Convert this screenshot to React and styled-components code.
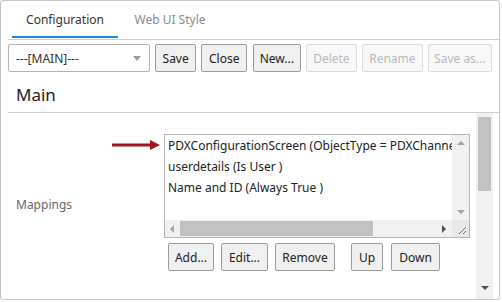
import React from 'react';
import styled, { createGlobalStyle } from 'styled-components';

const GlobalStyle = createGlobalStyle`
  body {
    margin: 0;
    background: #fff;
    font-family: "Noto Sans", "Open Sans", sans-serif;
    color: #222;
  }
`

const Frame = styled.div`
  width: 500px;
  height: 300px;
  box-sizing: border-box;
  border: 1px solid #c4c4c4;
  border-radius: 3px;
  display: flex;
  flex-direction: column;
  overflow: hidden;
`

const TabBar = styled.div`
  display: flex;
  margin: 0 0 0 7px;
  padding-left: 4px;
  border-bottom: 1px solid #cfcfcf;
  height: 39px;
  box-sizing: border-box;
`

const Tab = styled.div`
  width: ${p => p.w}px;
  box-sizing: border-box;
  display: flex;
  align-items: center;
  justify-content: center;
  font-size: 12px;
  color: ${p => p.active ? '#333' : '#8a8a8a'};
  border-bottom: 2px solid ${p => p.active ? '#1f8dd6' : 'transparent'};
  margin-bottom: 1px;
  padding-top: 1px;
`

const Toolbar = styled.div`
  display: flex;
  align-items: center;
  gap: 5px;
  padding: 4px 7px 0;
`

const Select = styled.div`
  width: 143px;
  height: 28px;
  box-sizing: border-box;
  border: 1px solid #b4b4b4;
  border-radius: 2px;
  display: flex;
  align-items: center;
  justify-content: space-between;
  padding: 0 8px 0 7px;
  font-size: 12px;
  color: #333;
`

const Caret = styled.span`
  width: 0;
  height: 0;
  border-left: 4px solid transparent;
  border-right: 4px solid transparent;
  border-top: 5px solid #9a9a9a;
`

const Button = styled.button`
  height: 28px;
  width: ${p => p.w}px;
  box-sizing: border-box;
  padding: 0;
  font-family: inherit;
  font-size: 12px;
  border-radius: 2px;
  border: 1px solid ${p => p.disabled ? '#dcdcdc' : '#9c9c9c'};
  background: ${p => p.disabled ? '#f8f8f8' : '#f0f0f0'};
  color: ${p => p.disabled ? '#b8b8b8' : '#222'};
  margin-left: ${p => p.ml || 0}px;
`

const Heading = styled.div`
  margin: 12px 0 0 7px;
  padding: 0 0 6px 8px;
  border-bottom: 1px solid #cfcfcf;
  font-size: 17px;
  line-height: 22px;
  color: #222;
`

const Body = styled.div`
  flex: 1;
  display: flex;
  margin-left: 7px;
  margin-right: 6px;
`

const Content = styled.div`
  flex: 1;
  display: flex;
  align-items: center;
  padding: 21px 0 0 8px;
  align-self: flex-start;
`

const Label = styled.div`
  width: 148px;
  font-size: 12px;
  color: #666;
  padding-top: 4px;
`

const Field = styled.div`
  display: flex;
  flex-direction: column;
  gap: 5px;
  position: relative;
`

const Arrow = styled.svg`
  position: absolute;
  left: -52px;
  top: 5px;
`

const ListBox = styled.div`
  width: 306px;
  height: 104px;
  box-sizing: border-box;
  border: 1px solid #b4b4b4;
  display: grid;
  grid-template-columns: 1fr 17px;
  grid-template-rows: 1fr 17px;
  overflow: hidden;
`

const Lines = styled.div`
  padding: 0 0 0 3px;
  font-size: 12px;
  line-height: 21px;
  white-space: nowrap;
  overflow: hidden;
  color: #222;
`

const VTrack = styled.div`
  background: #f1f1f1;
  display: flex;
  flex-direction: column;
  justify-content: space-between;
  align-items: center;
  padding: 6px 0;
`

const HTrack = styled.div`
  background: #f1f1f1;
  display: flex;
  align-items: center;
  padding: 0 6px 0 5px;
  gap: 6px;
`

const HThumb = styled.div`
  width: 193px;
  height: 15px;
  background: #c1c1c1;
`

const Spacer = styled.span`
  flex: 1;
`

const Corner = styled.div`
  background: #e8e8e8;
`

const Tri = styled.span`
  width: 0;
  height: 0;
  border-style: solid;
  border-color: transparent;
  ${p => p.dir === 'up' && `border-width: 0 4px 4px; border-bottom-color: ${p.c || '#a3a3a3'};`}
  ${p => p.dir === 'down' && `border-width: 4px 4px 0; border-top-color: ${p.c || '#a3a3a3'};`}
  ${p => p.dir === 'left' && `border-width: 4px 4px 4px 0; border-right-color: ${p.c || '#a3a3a3'};`}
  ${p => p.dir === 'right' && `border-width: 4px 0 4px 4px; border-left-color: ${p.c || '#505050'};`}
`

const ButtonRow = styled.div`
  display: flex;
  gap: 7px;
  padding-left: 4px;
`

const PageScroll = styled.div`
  width: 17px;
  background: #f1f1f1;
  display: flex;
  flex-direction: column;
  align-items: center;
  padding: 4px 0 9px;
  justify-content: space-between;
`

const PageThumb = styled.div`
  width: 13px;
  height: 74px;
  background: #c1c1c1;
`

const App = () => {
  return (
    <>
      <GlobalStyle />
      <Frame>
        <TabBar>
          <Tab active w={106}>Configuration</Tab>
          <Tab w={104}>Web UI Style</Tab>
        </TabBar>
        <Toolbar>
          <Select>---[MAIN]---<Caret /></Select>
          <Button w={42}>Save</Button>
          <Button w={46}>Close</Button>
          <Button w={48} ml={1}>New...</Button>
          <Button w={52} disabled>Delete</Button>
          <Button w={61} disabled>Rename</Button>
          <Button w={65} disabled>Save as...</Button>
        </Toolbar>
        <Heading>Main</Heading>
        <Body>
          <Content>
            <Label>Mappings</Label>
            <Field>
              <Arrow width="48" height="12" viewBox="0 0 48 12">
                <line x1="0" y1="6" x2="40" y2="6" stroke="#a0161f" strokeWidth="3" />
                <polygon points="38,1 48,6 38,11" fill="#a0161f" />
              </Arrow>
              <ListBox>
                <Lines>
                  <div>PDXConfigurationScreen (ObjectType = PDXChanne</div>
                  <div>userdetails (Is User )</div>
                  <div>Name and ID (Always True )</div>
                </Lines>
                <VTrack>
                  <Tri dir="up" />
                  <Tri dir="down" />
                </VTrack>
                <HTrack>
                  <Tri dir="left" />
                  <HThumb />
                  <Spacer />
                  <Tri dir="right" />
                </HTrack>
                <Corner>
                  <svg width="17" height="17" viewBox="0 0 17 17">
                    <line x1="7" y1="14" x2="14" y2="7" stroke="#777" strokeWidth="1" />
                    <line x1="11" y1="14" x2="14" y2="11" stroke="#777" strokeWidth="1" />
                  </svg>
                </Corner>
              </ListBox>
              <ButtonRow>
                <Button w={46}>Add...</Button>
                <Button w={47}>Edit...</Button>
                <Button w={60}>Remove</Button>
                <Button w={32} ml={9}>Up</Button>
                <Button w={49} ml={1}>Down</Button>
              </ButtonRow>
            </Field>
          </Content>
          <PageScroll>
            <PageThumb />
            <Tri dir="down" c="#505050" />
          </PageScroll>
        </Body>
      </Frame>
    </>
  );
}

export default App;
